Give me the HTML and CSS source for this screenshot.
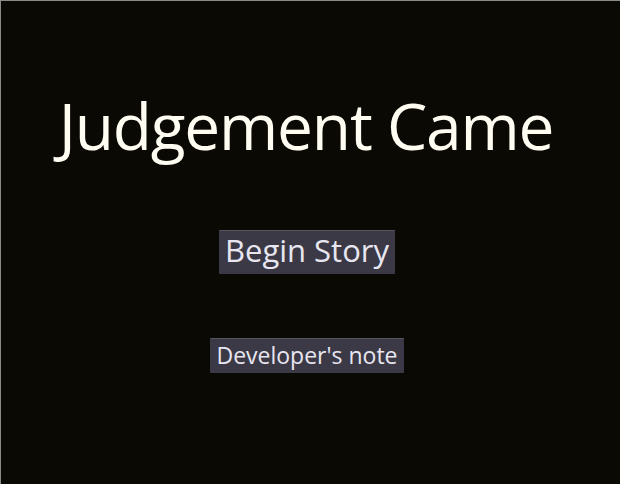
FILE: index.html
```html
<!DOCTYPE html>
<html>
<head>
<meta charset="utf-8">
<link rel="stylesheet" href="styles.css">
</head>
<body>
<main class="screen">
  <h1 class="title">Judgement Came</h1>
  <button class="btn btn-begin">Begin Story</button>
  <button class="btn btn-note">Developer's note</button>
</main>
</body>
</html>
```

FILE: styles.css
```css
html, body {
  margin: 0;
  padding: 0;
  background: #0b0904;
}
.screen {
  box-sizing: border-box;
  width: 620px;
  height: 484px;
  padding-right: 7px;
  border-top: 1px solid #8a8a8a;
  border-left: 1px solid #8a8a8a;
  background: #0b0904;
  display: flex;
  flex-direction: column;
  align-items: center;
  font-family: "Open Sans", "DejaVu Sans", sans-serif;
}
.title {
  margin: 85px 0 0 0;
  padding-right: 2px;
  font-weight: 400;
  font-size: 64px;
  letter-spacing: -1.2px;
  line-height: 80px;
  color: #fffcf2;
}
.btn {
  box-sizing: border-box;
  font-family: "Open Sans", "DejaVu Sans", sans-serif;
  background: #3b3946;
  color: #e8e6f0;
  border: none;
  border-top: 1px solid #57555f;
  border-radius: 1px;
  padding: 0 6px;
  cursor: pointer;
}
.btn-begin {
  margin-top: 64px;
  height: 44px;
  padding-bottom: 4px;
  font-size: 31px;
  line-height: 39px;
}
.btn-note {
  margin-top: 64px;
  height: 35px;
  padding-bottom: 2px;
  font-size: 23px;
  line-height: 32px;
}
```
